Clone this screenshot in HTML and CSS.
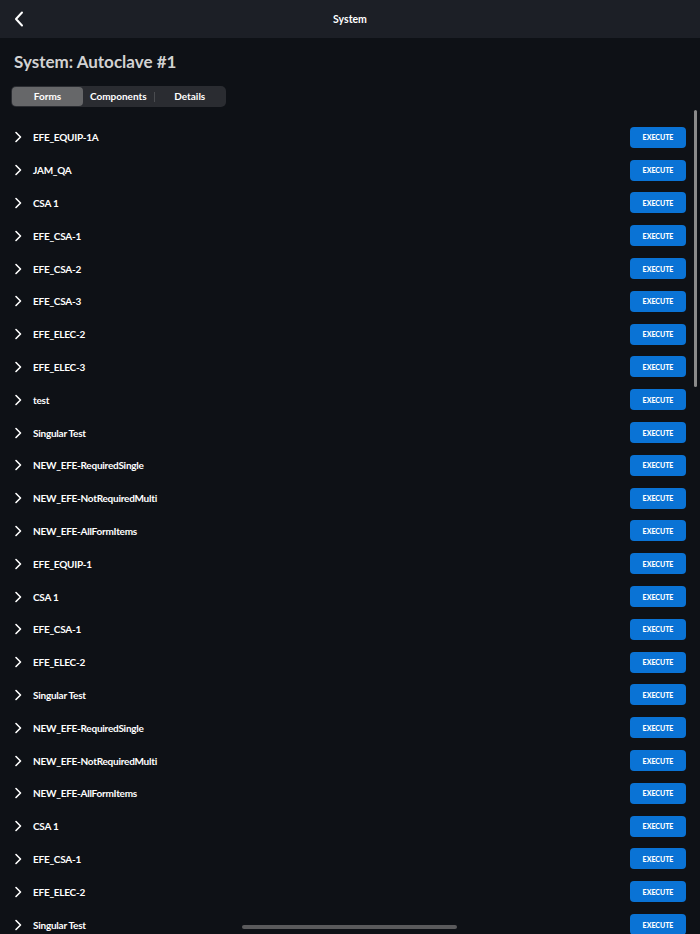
FILE: index.html
```html
<!DOCTYPE html>
<html lang="en">
  <head>
    <meta charset="UTF-8" />
    <meta name="viewport" content="width=device-width, initial-scale=1.0" />
    <title>System</title>
    <link rel="stylesheet" href="styles.css">
  </head>
  <body>
    <header class="header">
      <button class="back-button" aria-label="Back">
        <svg width="10" height="16" viewBox="0 0 10 16">
          <path d="M8 1.5 L2 8 L8 14.5" fill="none" stroke="#fff" stroke-width="2" stroke-linecap="round" stroke-linejoin="round" />
        </svg>
      </button>
      <div class="header-title">System</div>
      <div></div>
    </header>

    <main class="content">
      <h1 class="page-title">System: Autoclave #1</h1>

      <div class="tabs">
        <div class="tab active">Forms</div>
        <div class="tab">Components</div>
        <div class="tab-divider"></div>
        <div class="tab">Details</div>
      </div>

      <ul class="form-list" id="formList"></ul>
    </main>

    <div class="scrollbar"></div>
    <div class="home-indicator"></div>

    <script>
      const forms = [
        "EFE_EQUIP-1A",
        "JAM_QA",
        "CSA 1",
        "EFE_CSA-1",
        "EFE_CSA-2",
        "EFE_CSA-3",
        "EFE_ELEC-2",
        "EFE_ELEC-3",
        "test",
        "Singular Test",
        "NEW_EFE-RequiredSingle",
        "NEW_EFE-NotRequiredMulti",
        "NEW_EFE-AllFormItems",
        "EFE_EQUIP-1",
        "CSA 1",
        "EFE_CSA-1",
        "EFE_ELEC-2",
        "Singular Test",
        "NEW_EFE-RequiredSingle",
        "NEW_EFE-NotRequiredMulti",
        "NEW_EFE-AllFormItems",
        "CSA 1",
        "EFE_CSA-1",
        "EFE_ELEC-2",
        "Singular Test",
      ];

      const list = document.getElementById("formList");
      forms.forEach((name) => {
        const li = document.createElement("li");
        li.className = "form-row";
        li.innerHTML =
          '<svg class="chevron" width="8" height="12" viewBox="0 0 8 12">' +
          '<path d="M2 1.5 L6.5 6 L2 10.5" fill="none" stroke="#fff" stroke-width="1.6" stroke-linecap="round" stroke-linejoin="round" /></svg>' +
          '<span class="form-name"></span>' +
          '<button class="execute-button">EXECUTE</button>';
        li.querySelector(".form-name").textContent = name;
        list.appendChild(li);
      });
    </script>
  </body>
</html>
```

FILE: styles.css
```css
body {
  margin: 0;
  height: 934px;
  overflow: hidden;
  font-family: Lato, "Noto Sans", sans-serif;
  background-color: #0e1116;
  color: #fff;
}

.header {
  display: grid;
  grid-template-columns: 60px 1fr 60px;
  align-items: center;
  height: 38px;
  background-color: #1c1f26;
}

.back-button {
  display: flex;
  align-items: center;
  background: none;
  border: none;
  padding: 0 0 0 14px;
  cursor: pointer;
}

.header-title {
  text-align: center;
  font-size: 10.5px;
  font-weight: 700;
}

.content {
  padding: 14px 14px 0 14px;
}

.page-title {
  margin: 0;
  font-size: 17px;
  line-height: 20px;
  font-weight: 700;
  color: #d2d2d2;
}

.tabs {
  display: flex;
  align-items: center;
  width: 213px;
  height: 19px;
  margin: 14px 0 0 -3px;
  padding: 1px;
  background-color: #2a2c31;
  border-radius: 5px;
}

.tab {
  flex: 1;
  height: 19px;
  line-height: 19px;
  text-align: center;
  font-size: 10px;
  font-weight: 700;
  color: #fff;
  border-radius: 4px;
}

.tab.active {
  background-color: #666769;
  flex: 0 0 71px;
}

.tab-divider {
  width: 1px;
  height: 10px;
  background-color: #4a4c50;
}

.form-list {
  list-style-type: none;
  margin: 14px 0 0 0;
  padding: 0;
}

.form-row {
  display: flex;
  align-items: center;
  height: 32.8px;
}

.chevron {
  margin-right: 11px;
}

.form-name {
  flex: 1;
  font-size: 10px;
  font-weight: 700;
  letter-spacing: -0.25px;
}

.execute-button {
  width: 56px;
  height: 21px;
  padding: 0;
  background-color: #0a73d5;
  color: #fff;
  border: none;
  border-radius: 4px;
  font-family: Lato, "Noto Sans", sans-serif;
  font-size: 7px;
  font-weight: 900;
  cursor: pointer;
}

.scrollbar {
  position: absolute;
  top: 110px;
  left: 694px;
  width: 3px;
  height: 277px;
  border-radius: 2px;
  background-color: #8a8a8a;
}

.home-indicator {
  position: absolute;
  top: 925px;
  left: 242px;
  width: 215px;
  height: 4px;
  border-radius: 2px;
  background-color: #5a5a5c;
}
```
